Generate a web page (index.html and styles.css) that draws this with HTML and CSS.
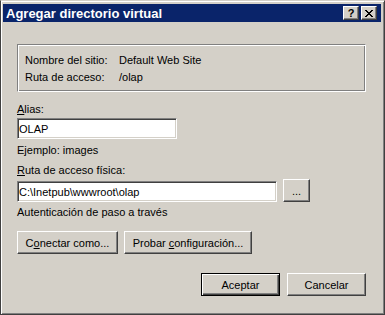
FILE: index.html
```html
<!DOCTYPE html>
<html lang="es">
<head>
    <meta charset="UTF-8">
    <meta name="viewport" content="width=device-width, initial-scale=1.0">
    <title>Agregar directorio virtual</title>
    <link rel="stylesheet" href="styles.css">
</head>
<body>
    <div class="window">
        <div class="titlebar">
            <span class="title">Agregar directorio virtual</span>
            <div class="caption-buttons">
                <span class="cap-btn help">?</span>
                <span class="cap-btn close">
                    <svg width="8" height="7" viewBox="0 0 8 7" shape-rendering="crispEdges">
                        <path fill="#000" d="M0 0h2v1H0zM6 0h2v1H6zM1 1h2v1H1zM5 1h2v1H5zM2 2h4v1H2zM3 3h2v1H3zM2 4h4v1H2zM1 5h2v1H1zM5 5h2v1H5zM0 6h2v1H0zM6 6h2v1H6z"/>
                    </svg>
                </span>
            </div>
        </div>

        <div class="content">
            <div class="group">
                <div class="info-row">
                    <span class="key">Nombre del sitio:</span>
                    <span>Default Web Site</span>
                </div>
                <div class="info-row">
                    <span class="key">Ruta de acceso:</span>
                    <span>/olap</span>
                </div>
            </div>

            <label class="label label-alias" for="alias"><u>A</u>lias:</label>
            <input class="edit edit-alias" type="text" id="alias" value="OLAP">
            <p class="note note-example">Ejemplo: images</p>

            <label class="label label-path" for="path"><u>R</u>uta de acceso física:</label>
            <div class="path-row">
                <input class="edit edit-path" type="text" id="path" value="C:\Inetpub\wwwroot\olap">
                <button class="btn btn-browse">...</button>
            </div>
            <p class="note note-auth">Autenticación de paso a través</p>

            <div class="action-row">
                <button class="btn btn-connect">C<u>o</u>nectar como...</button>
                <button class="btn btn-test">Probar <u>c</u>onfiguración...</button>
            </div>

            <div class="dialog-row">
                <button class="btn btn-dialog btn-default">Aceptar</button>
                <button class="btn btn-dialog">Cancelar</button>
            </div>
        </div>
    </div>
</body>
</html>
```

FILE: styles.css
```css
body {
    margin: 0;
    font-family: 'Liberation Sans', Arial, sans-serif;
    font-size: 11px;
    color: #000;
    background: #d4d0c8;
}
.window {
    width: 385px;
    height: 315px;
    box-sizing: border-box;
    background: #d4d0c8;
    border: 1px solid;
    border-color: #d4d0c8 #404040 #404040 #404040;
    box-shadow: inset 1px 1px #fff, inset -1px -1px #808080;
    padding: 3px 3px 2px 2px;
}
.titlebar {
    height: 18px;
    background: #0a246a;
    color: #fff;
    display: flex;
    align-items: center;
    justify-content: space-between;
    padding: 0 4px 0 3px;
}
.title {
    font-weight: bold;
    font-size: 13px;
}
.caption-buttons {
    display: flex;
    gap: 2px;
}
.cap-btn {
    width: 16px;
    height: 14px;
    box-sizing: border-box;
    background: #d4d0c8;
    border: 1px solid;
    border-color: #fff #404040 #404040 #fff;
    box-shadow: inset -1px -1px #808080;
    display: flex;
    align-items: center;
    justify-content: center;
    color: #000;
}
.help {
    font-weight: bold;
    font-size: 11px;
    line-height: 12px;
}
.content {
    padding: 22px 15px 0 14px;
}
.group {
    border: 1px solid;
    border-color: #808080 #fff #fff #808080;
    box-shadow: inset 1px 1px #fff, inset -1px -1px #808080;
    padding: 7px 6px 5px 7px;
}
.info-row {
    display: flex;
    line-height: 17px;
}
.key {
    width: 94px;
}
.label {
    display: block;
    line-height: 16px;
}
.label-alias {
    margin-top: 9px;
}
.label-path {
    margin-top: 4px;
}
.edit {
    display: block;
    box-sizing: border-box;
    height: 21px;
    margin: 1px 0 0;
    padding: 0 1px;
    font: inherit;
    color: #000;
    background: #fff;
    border: 1px solid;
    border-color: #808080 #fff #fff #808080;
    box-shadow: inset 1px 1px #404040, inset -1px -1px #d4d0c8;
    outline: none;
}
.edit-alias {
    width: 160px;
}
.edit-path {
    width: 260px;
    margin: 0;
}
.note {
    margin: 0;
    line-height: 16px;
}
.note-example {
    margin-top: 3px;
}
.note-auth {
    margin-top: 2px;
}
.path-row {
    display: flex;
    align-items: flex-end;
    gap: 6px;
    margin-top: 1px;
}
.btn {
    height: 23px;
    box-sizing: border-box;
    padding: 0;
    font: inherit;
    color: #000;
    background: #d4d0c8;
    border: 1px solid;
    border-color: #fff #404040 #404040 #fff;
    box-shadow: inset -1px -1px #808080, inset 1px 1px #d4d0c8;
    text-align: center;
}
.btn-browse {
    width: 27px;
}
.action-row {
    display: flex;
    gap: 6px;
    margin-top: 11px;
}
.btn-connect {
    width: 101px;
}
.btn-test {
    width: 128px;
}
.dialog-row {
    display: flex;
    justify-content: flex-end;
    gap: 7px;
    margin-top: 19px;
}
.btn-dialog {
    width: 79px;
}
.btn-default {
    border-color: #000;
    box-shadow: inset 1px 1px #fff, inset -1px -1px #404040, inset -2px -2px #808080;
}
```
